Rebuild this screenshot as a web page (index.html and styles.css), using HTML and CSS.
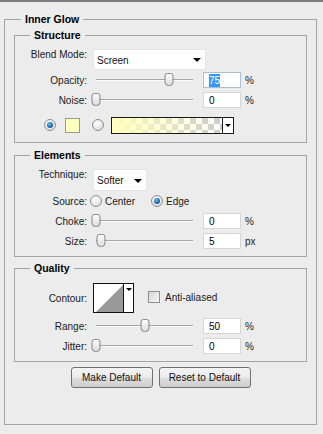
FILE: index.html
```html
<!DOCTYPE html>
<html>
<head>
<meta charset="utf-8">
<link rel="stylesheet" href="styles.css">
</head>
<body>
<div class="topbar"></div>
<fieldset class="group outer">
  <legend>Inner Glow</legend>

  <fieldset class="group sub structure">
    <legend>Structure</legend>
    <div class="row row-sel">
      <span class="label">Blend Mode:</span>
      <div class="select blend"><span>Screen</span><i class="arrow"></i></div>
    </div>
    <div class="row">
      <span class="label">Opacity:</span>
      <div class="slider"><div class="track"><div class="thumb" style="left:75%"></div></div></div>
      <div class="num focus"><span class="hl">75</span></div>
      <span class="unit">%</span>
    </div>
    <div class="row">
      <span class="label">Noise:</span>
      <div class="slider"><div class="track"><div class="thumb" style="left:0%"></div></div></div>
      <div class="num"><span>0</span></div>
      <span class="unit">%</span>
    </div>
    <div class="row row-color">
      <span class="radio on"></span>
      <span class="swatch"></span>
      <span class="radio"></span>
      <div class="gradbox"><div class="grad"></div><div class="gradarrow"><i class="arrow small"></i></div></div>
    </div>
  </fieldset>

  <fieldset class="group sub elements">
    <legend>Elements</legend>
    <div class="row row-sel">
      <span class="label">Technique:</span>
      <div class="select tech"><span>Softer</span><i class="arrow"></i></div>
    </div>
    <div class="row">
      <span class="label">Source:</span>
      <span class="radio src"></span><span class="rtext">Center</span>
      <span class="radio on src2"></span><span class="rtext">Edge</span>
    </div>
    <div class="row">
      <span class="label">Choke:</span>
      <div class="slider"><div class="track"><div class="thumb" style="left:0%"></div></div></div>
      <div class="num"><span>0</span></div>
      <span class="unit">%</span>
    </div>
    <div class="row">
      <span class="label">Size:</span>
      <div class="slider"><div class="track"><div class="thumb" style="left:5%"></div></div></div>
      <div class="num"><span>5</span></div>
      <span class="unit">px</span>
    </div>
  </fieldset>

  <fieldset class="group sub quality">
    <legend>Quality</legend>
    <div class="row row-contour">
      <span class="label">Contour:</span>
      <div class="contour">
        <svg class="curve" width="29" height="28" viewBox="0 0 29 28"><rect width="29" height="28" fill="#fff"/><polygon points="2,28 29,1 29,28" fill="#999"/></svg>
        <div class="carrow"><i class="arrow small"></i></div>
      </div>
      <span class="check"></span><span class="ctext">Anti-aliased</span>
    </div>
    <div class="row row-range">
      <span class="label">Range:</span>
      <div class="slider"><div class="track"><div class="thumb" style="left:50%"></div></div></div>
      <div class="num"><span>50</span></div>
      <span class="unit">%</span>
    </div>
    <div class="row">
      <span class="label">Jitter:</span>
      <div class="slider"><div class="track"><div class="thumb" style="left:0%"></div></div></div>
      <div class="num"><span>0</span></div>
      <span class="unit">%</span>
    </div>
  </fieldset>

  <div class="buttons">
    <button class="btn make">Make Default</button>
    <button class="btn reset">Reset to Default</button>
  </div>
</fieldset>
</body>
</html>
```

FILE: styles.css
```css
* { box-sizing: border-box; }
html, body { margin: 0; padding: 0; }
body {
  background: #ececec;
  font-family: "Liberation Sans", Arial, sans-serif;
  font-size: 10px;
  color: #111;
  width: 323px;
  height: 434px;
  overflow: hidden;
}
.topbar { height: 2px; background: #7c7c7c; }

.group {
  border: 1px solid #a3a3a3;
  margin: 0;
  min-width: 0;
}
.group > legend {
  font-weight: bold;
  font-size: 10.5px;
  line-height: 14px;
  padding: 0 4px;
  color: #000;
}
.outer {
  margin: 10px 0 0 4px;
  width: 313px;
  padding: 2px 9px 36px 9px;
}
.outer > legend { margin-left: 7px; }
.sub {
  width: 293px;
  padding: 0;
}
.sub > legend { margin-left: 15px; }

.structure { padding: 7px 0 7px 0; }
.elements { margin-top: 5px; padding: 7px 0 5px 0; }
.quality { margin-top: 4px; padding: 8px 0 5px 0; }

.row {
  display: flex;
  align-items: center;
  height: 20px;
}
.row-sel { height: 21px; align-items: stretch; }
.elements .row-sel { height: 22px; }
.row-color { margin-top: 5px; }
.row-contour { height: 30px; }
.row-range { margin-top: 3px; }

.label {
  width: 72px;
  text-align: right;
  flex: none;
  margin-right: 6px;
  color: #1a1a1a;
}

.select {
  background: #fff;
  border: 1px solid #e4e4e4;
  display: flex;
  align-items: center;
  justify-content: space-between;
  padding: 1px 4px 0 3px;
}
.blend { width: 113px; }
.tech { width: 54px; }
.arrow {
  display: block;
  width: 0; height: 0;
  border-left: 4px solid transparent;
  border-right: 4px solid transparent;
  border-top: 4px solid #000;
}
.arrow.small {
  border-left-width: 3px;
  border-right-width: 3px;
  border-top-width: 3px;
}

.slider {
  width: 104px;
  flex: none;
  padding: 0 4px 0 3px;
}
.track {
  position: relative;
  height: 2px;
  border-top: 1px solid #a6a6a6;
  border-bottom: 1px solid #fbfbfb;
}
.thumb {
  position: absolute;
  top: -7px;
  width: 9px;
  height: 13px;
  transform: translateX(-50%);
  border: 1px solid #858585;
  border-radius: 3px 3px 4px 4px;
  background: linear-gradient(#fefefe, #dcdcdc);
}

.num {
  width: 38px;
  height: 16px;
  margin-left: 6px;
  background: #fff;
  border: 1px solid #d6d6d6;
  padding: 0 0 0 5px;
  display: flex;
  align-items: center;
  flex: none;
  color: #000;
}
.num.focus { border-color: #a9bfd6; }
.hl { background: #3399ff; color: #fff; padding: 1px 0; }
.unit { margin-left: 4px; color: #222; }

.radio {
  width: 12px;
  height: 12px;
  border-radius: 50%;
  border: 1px solid #8e8f8f;
  background: radial-gradient(circle at 40% 35%, #ffffff 0%, #e6e6e6 60%, #cfcfcf 100%);
  flex: none;
  display: flex;
  align-items: center;
  justify-content: center;
}
.radio.on::after {
  content: "";
  width: 6px;
  height: 6px;
  border-radius: 50%;
  background: radial-gradient(circle at 40% 35%, #7dc4f2 0%, #2479b8 45%, #0c3e6c 100%);
}
.row-color .radio.on { margin-left: 29px; }
.swatch {
  width: 15px;
  height: 15px;
  margin-left: 9px;
  background: #ffffbe;
  border: 1px solid #9a9a8a;
  flex: none;
}
.row-color .radio:not(.on) { margin-left: 12px; }
.gradbox {
  margin-left: 7px;
  width: 123px;
  height: 17px;
  border: 1px solid #1a1a1a;
  display: flex;
  flex: none;
}
.grad {
  flex: 1;
  background:
    linear-gradient(to right, rgba(255,255,190,1) 0%, rgba(255,255,190,0.6) 40%, rgba(255,255,190,0) 100%),
    repeating-conic-gradient(#cccccc 0% 25%, #ffffff 0% 50%) 0 0 / 12px 12px;
}
.gradarrow {
  width: 11px;
  border-left: 1px solid #1a1a1a;
  background: #fff;
  display: flex;
  align-items: center;
  justify-content: center;
}

.src { margin-left: -3px; }
.rtext { margin-left: 3px; color: #1a1a1a; }
.src2 { margin-left: 16px; }

.contour {
  width: 41px;
  height: 30px;
  border: 1px solid #111;
  display: flex;
  flex: none;
  background: #fff;
}
.curve { display: block; }
.carrow {
  width: 10px;
  border-left: 1px solid #111;
  display: flex;
  justify-content: center;
  padding-top: 4px;
}
.check {
  width: 12px;
  height: 12px;
  margin-left: 14px;
  border: 1px solid #8e8f8f;
  background: linear-gradient(135deg, #d6d6d6, #f8f8f8);
  flex: none;
  margin-top: -2px;
}
.ctext { margin-left: 5px; margin-top: -2px; color: #1a1a1a; }

.buttons {
  display: flex;
  justify-content: center;
  gap: 6px;
  margin-top: 5px;
}
.btn {
  height: 21px;
  border: 1px solid #707070;
  border-radius: 3px;
  background: linear-gradient(#f3f3f3 0%, #ebebeb 50%, #dddddd 51%, #cfcfcf 100%);
  font-family: "Liberation Sans", Arial, sans-serif;
  font-size: 10px;
  color: #111;
  padding: 0;
}
.make { width: 82px; }
.reset { width: 92px; }
```
